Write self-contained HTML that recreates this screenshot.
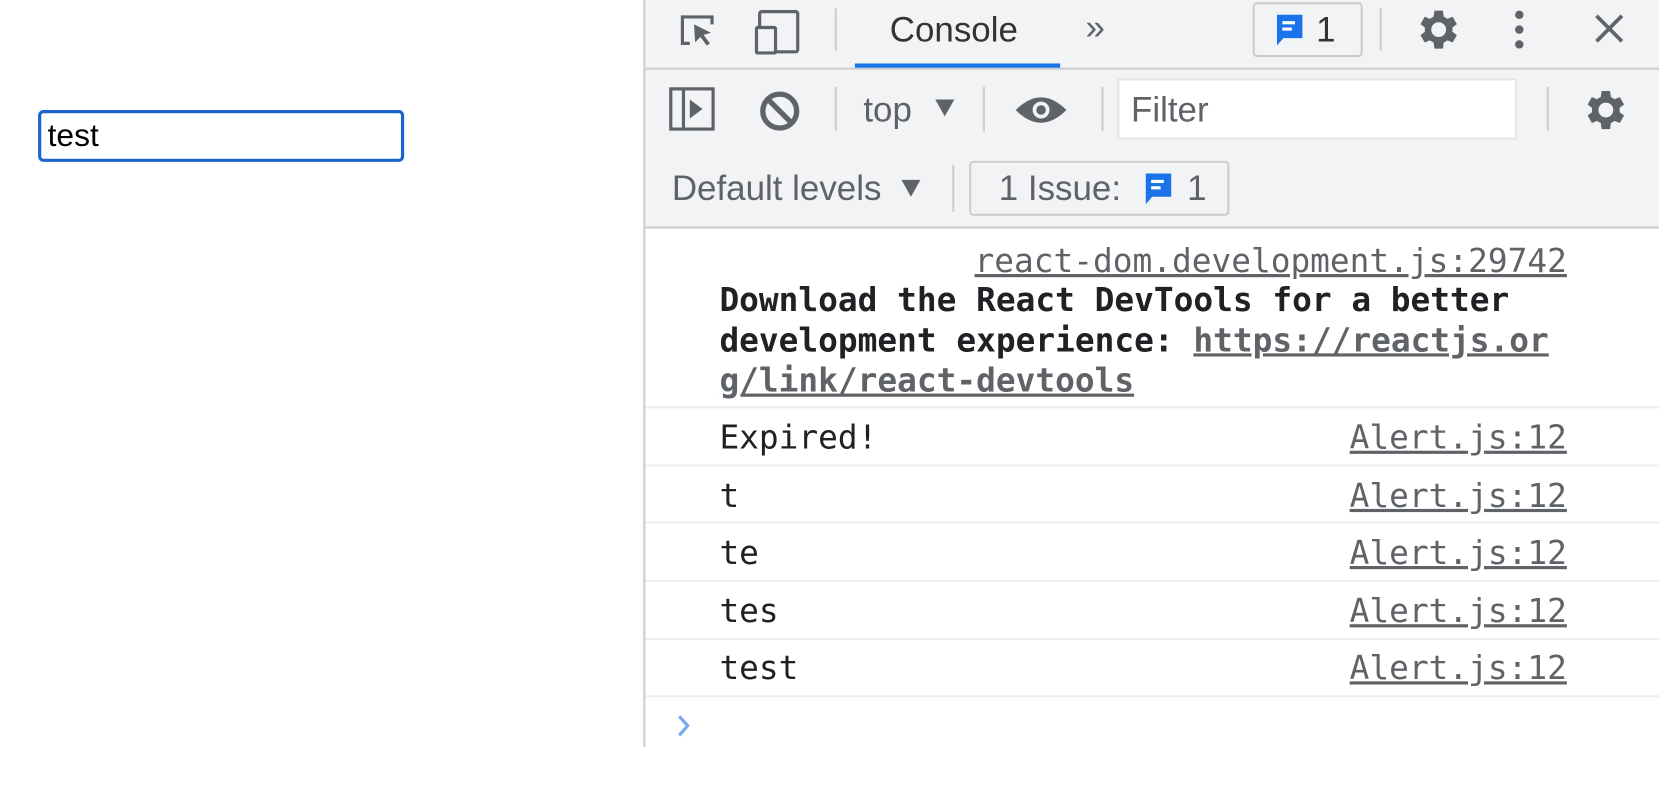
<!DOCTYPE html>
<html><head><style>
body{margin:0;width:1659px;height:748px;background:#fff;position:relative;overflow:hidden;font-family:"Liberation Sans",sans-serif}
#wrap{position:absolute;left:0;top:0;width:1659px;height:748px;transform:scale(1.058);transform-origin:0 0}
.abs{position:absolute}
#inp{left:36px;top:104px;height:43px;border:3px solid #1a64d0;border-radius:5px;font-size:30px;line-height:43px;padding-left:6px;width:334px}
#dt{left:608px;top:0;width:1051px;height:706px;border-left:2px solid #cbcdd1;background:#fff}
.bar{background:#f1f3f4;position:absolute;left:0;width:100%}
.sep{position:absolute;width:2px;background:#cbcdd1}
.t{position:absolute;color:#333;font-size:33px}
.mono{font-family:"DejaVu Sans Mono","Liberation Mono",monospace;font-size:31px;color:#202124;position:absolute;line-height:36px}
.lnk{text-decoration:underline;color:#5f6368}
.row{position:absolute;left:0;width:100%;border-top:2px solid #eceef0}
</style></head><body><div id="wrap">
<div id="inp" class="abs">test</div>
<div id="dt" class="abs">
 <div class="bar" style="top:0;height:64px;border-bottom:2px solid #cbcdd1"></div>
 <div class="bar" style="top:66px;height:148px;border-bottom:2px solid #cbcdd1"></div>
 <svg class="abs" style="left:28px;top:8px" width="150" height="45" viewBox="0 0 150 45">
  <path d="M14 33H7V8h28v7" fill="none" stroke="#5f6368" stroke-width="3"/>
  <path d="M18 15l16 8-7 2 6 8-3 2-6-8-5 5z" fill="#5f6368"/>
  <rect x="80" y="3" width="36" height="38" rx="2" fill="none" stroke="#5f6368" stroke-width="3"/>
  <rect x="77" y="18" width="18" height="24" rx="1" fill="#f1f3f4" stroke="#5f6368" stroke-width="3"/>
 </svg>
 <div class="sep" style="left:179px;top:8px;height:40px"></div>
 <div class="t" style="left:231px;top:9px">Console</div>
 <div class="abs" style="left:198px;top:60px;width:194px;height:4px;background:#1a73e8"></div>
 <div class="t" style="left:416px;top:7px;color:#5f6368">»</div>
 <div class="abs" style="left:574px;top:2px;width:100px;height:48px;border:2px solid #cbcdd1;border-radius:4px;background:#f1f3f4"></div>
 <svg class="abs" style="left:594px;top:12px" width="30" height="34" viewBox="0 0 30 34"><path d="M3 2h24v22H9l-6 7z" fill="#1a73e8"/><rect x="8" y="8" width="12" height="3" fill="#fff"/><rect x="8" y="14" width="9" height="3" fill="#fff"/></svg>
 <div class="t" style="left:634px;top:9px">1</div>
 <div class="sep" style="left:694px;top:8px;height:40px"></div>
 <svg class="abs" style="left:724px;top:4px" width="48" height="48" viewBox="0 0 24 24"><path fill="#5f6368" d="M19.4 13a7.5 7.5 0 000-2l2.1-1.6-2-3.5-2.5 1a7 7 0 00-1.7-1L14.9 3h-4l-.4 2.9a7 7 0 00-1.7 1l-2.5-1-2 3.5L6.4 11a7.5 7.5 0 000 2l-2.1 1.6 2 3.5 2.5-1a7 7 0 001.7 1l.4 2.9h4l.4-2.9a7 7 0 001.7-1l2.5 1 2-3.5zM12.9 15.5a3.5 3.5 0 110-7 3.5 3.5 0 010 7z"/></svg>
 <svg class="abs" style="left:816px;top:8px" width="20" height="40"><circle cx="10" cy="6" r="4" fill="#5f6368"/><circle cx="10" cy="20" r="4" fill="#5f6368"/><circle cx="10" cy="34" r="4" fill="#5f6368"/></svg>
 <svg class="abs" style="left:896px;top:12px" width="30" height="30"><path d="M3 3L27 27M27 3L3 27" stroke="#5f6368" stroke-width="3.5"/></svg>
 <svg class="abs" style="left:22px;top:82px" width="46" height="44"><rect x="2" y="2" width="40" height="38" fill="none" stroke="#5f6368" stroke-width="3"/><line x1="14" y1="2" x2="14" y2="40" stroke="#5f6368" stroke-width="3"/><path d="M20 12l12 9-12 9z" fill="#5f6368"/></svg>
 <svg class="abs" style="left:106px;top:84px" width="42" height="42"><circle cx="21" cy="21" r="16" fill="none" stroke="#5f6368" stroke-width="5"/><line x1="10" y1="10" x2="32" y2="32" stroke="#5f6368" stroke-width="5"/></svg>
 <div class="sep" style="left:179px;top:82px;height:42px"></div>
 <div class="t" style="left:206px;top:85px;color:#5f6368">top</div>
 <div class="abs" style="left:274px;top:94px;width:0;height:0;border-left:9px solid transparent;border-right:9px solid transparent;border-top:16px solid #5f6368"></div>
 <div class="sep" style="left:319px;top:82px;height:42px"></div>
 <svg class="abs" style="left:348px;top:88px" width="52" height="32"><path d="M2 16Q26-8 50 16Q26 40 2 16z" fill="#5f6368"/><circle cx="26" cy="16" r="8" fill="#f1f3f4"/><circle cx="26" cy="16" r="4.5" fill="#5f6368"/></svg>
 <div class="sep" style="left:431px;top:82px;height:42px"></div>
 <div class="abs" style="left:446px;top:74px;width:374px;height:54px;background:#fff;border:2px solid #e3e5e8"></div>
 <div class="t" style="left:459px;top:85px;color:#5f6368">Filter</div>
 <div class="sep" style="left:852px;top:82px;height:42px"></div>
 <svg class="abs" style="left:882px;top:80px" width="48" height="48" viewBox="0 0 24 24"><path fill="#5f6368" d="M19.4 13a7.5 7.5 0 000-2l2.1-1.6-2-3.5-2.5 1a7 7 0 00-1.7-1L14.9 3h-4l-.4 2.9a7 7 0 00-1.7 1l-2.5-1-2 3.5L6.4 11a7.5 7.5 0 000 2l-2.1 1.6 2 3.5 2.5-1a7 7 0 001.7 1l.4 2.9h4l.4-2.9a7 7 0 001.7-1l2.5 1 2-3.5zM12.9 15.5a3.5 3.5 0 110-7 3.5 3.5 0 010 7z"/></svg>
 <div class="t" style="left:25px;top:159px;color:#5f6368">Default levels</div>
 <div class="abs" style="left:242px;top:170px;width:0;height:0;border-left:9px solid transparent;border-right:9px solid transparent;border-top:16px solid #5f6368"></div>
 <div class="sep" style="left:290px;top:156px;height:44px"></div>
 <div class="abs" style="left:306px;top:152px;width:242px;height:48px;border:2px solid #cbcdd1;border-radius:4px"></div>
 <div class="t" style="left:334px;top:159px;color:#5f6368">1 Issue:</div>
 <svg class="abs" style="left:470px;top:162px" width="30" height="34" viewBox="0 0 30 34"><path d="M3 2h24v22H9l-6 7z" fill="#1a73e8"/><rect x="8" y="8" width="12" height="3" fill="#fff"/><rect x="8" y="14" width="9" height="3" fill="#fff"/></svg>
 <div class="t" style="left:512px;top:159px;color:#5f6368">1</div>
 <div class="mono lnk" style="right:180px;top:229px">react-dom.development.js:29742</div>
 <div class="mono" style="left:70px;top:265px;font-weight:bold;line-height:38px;width:900px">Download the React DevTools for a better<br>development experience: <span class="lnk">https://reactjs.or</span><br><span class="lnk">g/link/react-devtools</span></div>
 <div class="row" style="top:384px"></div>
 <div class="mono" style="left:70px;top:396px">Expired!</div><div class="mono lnk" style="right:180px;top:396px">Alert.js:12</div>
 <div class="row" style="top:439px"></div>
 <div class="mono" style="left:70px;top:451px">t</div><div class="mono lnk" style="right:180px;top:451px">Alert.js:12</div>
 <div class="row" style="top:493px"></div>
 <div class="mono" style="left:70px;top:505px">te</div><div class="mono lnk" style="right:180px;top:505px">Alert.js:12</div>
 <div class="row" style="top:548px"></div>
 <div class="mono" style="left:70px;top:560px">tes</div><div class="mono lnk" style="right:180px;top:560px">Alert.js:12</div>
 <div class="row" style="top:603px"></div>
 <div class="mono" style="left:70px;top:614px">test</div><div class="mono lnk" style="right:180px;top:614px">Alert.js:12</div>
 <div class="row" style="top:657px"></div>
 <svg class="abs" style="left:28px;top:674px" width="16" height="24"><path d="M4 3l8 9-8 9" fill="none" stroke="#7aa7f0" stroke-width="3"/></svg>
</div>
</div></body></html>
